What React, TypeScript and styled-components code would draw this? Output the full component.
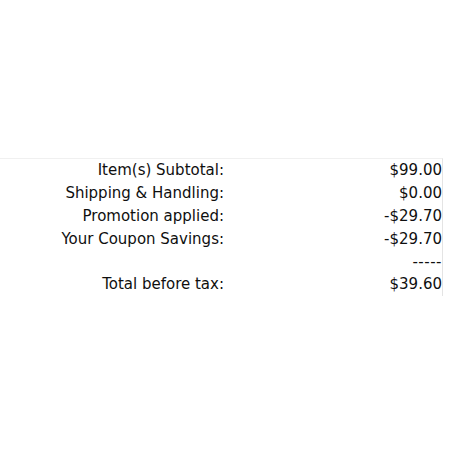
import React from "react";
import styled, { createGlobalStyle } from "styled-components";

const Global = createGlobalStyle`
  html, body { margin: 0; padding: 0; background: #ffffff; }
  body { font-family: "DejaVu Sans", Verdana, sans-serif; color: #0f0f0f; }
`;

const Page = styled.div`
  padding-top: 158px;
`;

const Summary = styled.div`
  width: 442px;
  border-top: 1px solid #f0f0f0;
  border-right: 1px solid #e4e4e4;
  display: grid;
  grid-template-columns: 225px 1fr;
  grid-auto-rows: 22.8px;
  align-items: center;
  padding-bottom: 0px;
  font-size: 15px;
`;

const Label = styled.div`
  text-align: right;
  padding-right: 1px;
  white-space: nowrap;
`;

const Value = styled.div<{ $rule?: boolean }>`
  text-align: right;
  white-space: nowrap;
  letter-spacing: ${(p) => (p.$rule ? "0.5px" : "0")};
`;

const rows: { label: string; value: string; rule?: boolean }[] = [
  { label: "Item(s) Subtotal:", value: "$99.00" },
  { label: "Shipping & Handling:", value: "$0.00" },
  { label: "Promotion applied:", value: "-$29.70" },
  { label: "Your Coupon Savings:", value: "-$29.70" },
  { label: "", value: "-----", rule: true },
  { label: "Total before tax:", value: "$39.60" },
];

export default function App() {
  return (
    <>
      <Global />
      <Page>
        <Summary>
          {rows.map((r, i) => (
            <React.Fragment key={i}>
              <Label>{r.label}</Label>
              <Value $rule={r.rule}>{r.value}</Value>
            </React.Fragment>
          ))}
        </Summary>
      </Page>
    </>
  );
}
